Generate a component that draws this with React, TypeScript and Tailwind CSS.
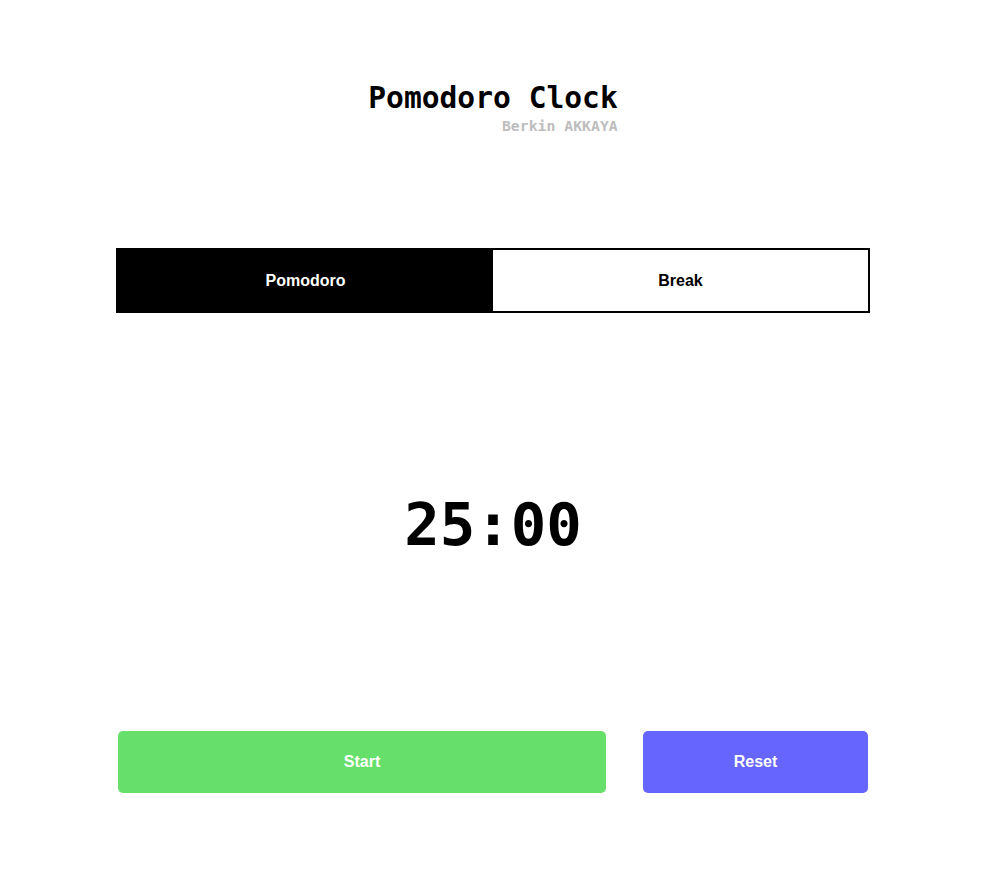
export default function App()
{
    return (
        <div className="min-h-[889px] bg-white">
            <div className="w-[986px] flex flex-col items-center">
                <header className="mt-[80px] flex flex-col items-end">
                    <h1 className="text-[29.6px] leading-[36px] font-bold text-black font-['DejaVu_Sans_Mono',monospace]">
                        Pomodoro Clock
                    </h1>
                    <p className="mt-[1px] text-[14.8px] leading-[18px] font-bold text-[#bdbdbd] font-['DejaVu_Sans_Mono',monospace]">
                        Berkin AKKAYA
                    </p>
                </header>

                <div className="mt-[113px] w-[754px] h-[65px] flex border-2 border-black font-['Liberation_Sans',sans-serif] font-bold text-[16px]">
                    <button className="flex-1 bg-black text-white">Pomodoro</button>
                    <button className="flex-1 bg-white text-black">Break</button>
                </div>

                <div className="mt-[176px] text-[59px] leading-[72px] font-bold text-black font-['DejaVu_Sans_Mono',monospace]">
                    25:00
                </div>

                <div className="mt-[170px] w-[750px] flex gap-[37px] font-['Liberation_Sans',sans-serif] font-bold text-[16px] text-white">
                    <button className="w-[488px] h-[62px] rounded-[5px] bg-[#67df6b]">Start</button>
                    <button className="w-[225px] h-[62px] rounded-[5px] bg-[#6666ff]">Reset</button>
                </div>
            </div>
        </div>
    )
}
